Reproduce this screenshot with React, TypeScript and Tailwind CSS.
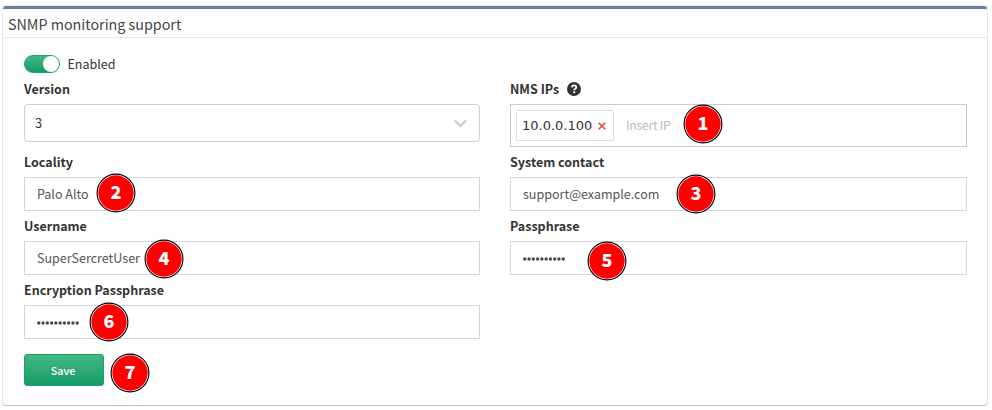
import type { ReactNode } from "react";

function Badge({ n, place }: { n: number; place: string }) {
  return (
    <span className={`absolute z-10 flex size-10 items-center justify-center ${place}`}>
      <svg className="absolute inset-0 size-10" viewBox="0 0 40 40">
        <circle cx="20" cy="20" r="18.9" fill="#fff" stroke="#000" strokeWidth="1.15" />
        <circle cx="20" cy="20" r="17.7" fill="#f00" />
      </svg>
      <span className="relative pb-[5px] text-[18px] leading-none font-black text-white">{n}</span>
    </span>
  );
}

function Field({ label, children }: { label: ReactNode; children: ReactNode }) {
  return (
    <div className="relative">
      <div className="mb-[5px] flex h-5 items-center text-[12.5px] leading-5 font-bold text-[#333]">{label}</div>
      {children}
    </div>
  );
}

function TextBox({ children }: { children: ReactNode }) {
  return (
    <div className="flex h-[34px] items-center border border-[#d2d6de] bg-white px-3 text-[12.53px] leading-5 text-[#555]">
      {children}
    </div>
  );
}

function Dots() {
  return (
    <svg className="mt-px h-1 w-[43px]" viewBox="0 0 43 4" fill="#4a4a4a" aria-label="password">
      {Array.from({ length: 10 }, (_, i) => (
        <circle key={i} cx={1.8 + i * 4.27} cy="2" r="1.7" />
      ))}
    </svg>
  );
}

export default function App() {
  return (
    <div className="h-[410px] w-[992px] overflow-hidden bg-white pt-1.5 pl-[3px] font-['Noto_Sans_CJK_SC',sans-serif] text-[#333]">
      <section className="h-[399px] w-[984px] rounded-[3px] border-t-[3px] border-[#6780a0] bg-white shadow-[0_1px_1px_rgba(0,0,0,0.2),0_0_0_1px_rgba(0,0,0,0.08)]">
        <h1 className="h-[29px] border-b border-[#e8e8e8] pl-[5px] text-[14.3px] leading-[30px] text-[#444]">
          SNMP monitoring support
        </h1>
        <div className="pt-[17px] pr-5 pl-[21px]">
          <div className="mb-1.5 flex h-[18px] items-center">
            <span className="flex h-[18px] w-9 items-center justify-end rounded-full border border-[#16a06c] bg-linear-to-b from-[#42b883] to-[#119c6a]">
              <i className="size-4 rounded-full bg-white" />
            </span>
            <span className="ml-[7.5px] text-[12.5px] leading-5">Enabled</span>
          </div>
          <div className="grid grid-cols-[456px_457px] gap-x-[30px] gap-y-[5px]">
            <Field label="Version">
              <div className="flex h-[38px] items-center justify-between rounded border border-[#ccc] pr-3 pl-2.5 text-[12.8px]">
                3
                <svg className="h-[9px] w-[13px]" viewBox="0 0 13 9" fill="none" stroke="#ccc" strokeWidth="2.2" strokeLinecap="round" strokeLinejoin="round">
                  <path d="M1.5 2 6.5 7l5-5" />
                </svg>
              </div>
            </Field>
            <Field
              label={
                <>
                  NMS IPs
                  <svg className="ml-2 size-3.5" viewBox="0 0 14 14">
                    <circle cx="7" cy="7" r="7" fill="#333" />
                    <path d="M4.8 5.3C5 3.8 6 3.3 7 3.3c1.3 0 2.3.8 2.3 1.9C9.3 6.7 7.2 6.7 7.2 8.3" fill="none" stroke="#fff" strokeWidth="1.7" />
                    <path d="M6.2 9.3h2v1.8h-2z" fill="#fff" />
                  </svg>
                </>
              }
            >
              <div className="flex h-[43px] items-center border border-[#ccc] px-[5px]">
                <div className="flex h-[31px] w-[98px] items-center rounded-[1px] border border-[#ddd] pl-[5px] font-['DejaVu_Sans',sans-serif] text-[13px]">
                  10.0.0.100
                  <svg className="mt-px ml-[6px] size-2 shrink-0" viewBox="0 0 8 8" stroke="#dd4b39" strokeWidth="1.6">
                    <path d="m.7.7 6.6 6.6m0-6.6L.7 7.3" />
                  </svg>
                </div>
                <span className="ml-3 text-[12.2px] tracking-[-0.25px] text-[#bbb]">Insert IP</span>
              </div>
              <Badge n={1} place="left-[173px] top-[25px]" />
            </Field>
            <Field label="Locality">
              <TextBox>Palo Alto</TextBox>
              <Badge n={2} place="left-[72px] top-[21px]" />
            </Field>
            <Field label="System contact">
              <TextBox>support@example.com</TextBox>
              <Badge n={3} place="left-[166px] top-[22px]" />
            </Field>
            <Field label="Username">
              <TextBox>SuperSercretUser</TextBox>
              <Badge n={4} place="left-[120px] top-[23px]" />
            </Field>
            <Field label="Passphrase">
              <TextBox><Dots /></TextBox>
              <Badge n={5} place="left-[77px] top-[25px]" />
            </Field>
            <Field label="Encryption Passphrase">
              <TextBox><Dots /></TextBox>
              <Badge n={6} place="left-[65px] top-[22px]" />
            </Field>
          </div>
          <div className="relative mt-[15px]">
            <button className="block h-8 w-20 rounded-[3px] border border-[#16a06c] bg-linear-to-b from-[#42b883] to-[#119c6a] pr-0.5 pb-px text-[10.8px] leading-[28px] font-medium text-white">
              Save
            </button>
            <Badge n={7} place="left-[86px] -top-px" />
          </div>
        </div>
      </section>
    </div>
  );
}
